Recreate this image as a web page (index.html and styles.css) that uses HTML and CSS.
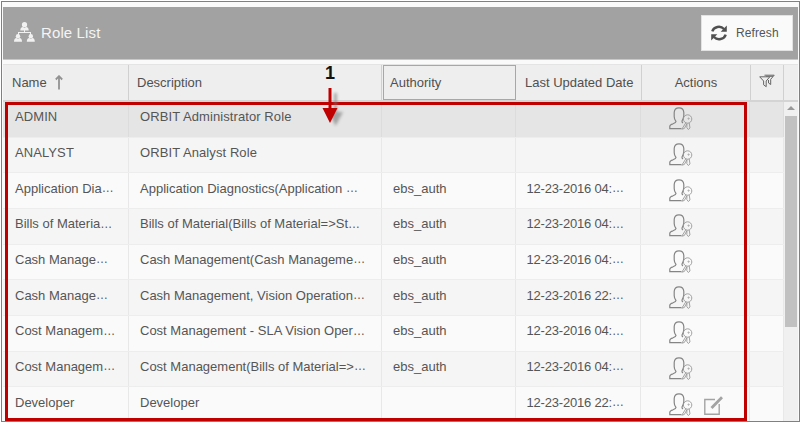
FILE: index.html
```html
<!DOCTYPE html>
<html lang="en">
<head>
<meta charset="utf-8">
<title>Role List</title>
<link rel="stylesheet" href="styles.css">
</head>
<body>
<svg width="0" height="0" class="defs">
  <symbol id="user-key" viewBox="0 0 24 24">
    <path d="M12.5 21.6H.8V19.3Q1 17.5 4 16.8Q7 15.8 7 14.5Q5.2 12.5 5.2 9.5V5.5Q5.5.8 10 .8T14.8 5.5V8.5Q14.5 12 13 14Q12.8 15.2 14 16"/>
    <g class="thin"><circle cx="18.6" cy="12" r="4.2"/>
    <circle cx="19.6" cy="11.6" r=".6"/>
    <path d="M16.8 15.8L12.8 22.2L15.3 21.5L18 16.6M18 16.6L17.8 20.5L19.3 22.5L21 21L20.2 16"/></g>
  </symbol>
</svg>
<div class="window">
  <header class="bar">
    <svg class="org" width="21" height="20" viewBox="0 0 21 20">
      <circle cx="10.5" cy="2.7" r="2.6"/><path d="M6.3 8.5Q6.3 5.2 9 5L10.5 6L12 5Q14.7 5.2 14.7 8.5Z"/>
      <path d="M10 8H11V10H17V13H16V11H5V13H4V10H10Z"/>
      <circle cx="4" cy="14.3" r="2.2"/><path d="M0 19.8Q0 16.3 2.5 16L4 17L5.5 16Q8 16.3 8 19.8Z"/>
      <circle cx="16.8" cy="14.3" r="2.2"/><path d="M12.8 19.8Q12.8 16.3 15.3 16L16.8 17L18.3 16Q20.8 16.3 20.8 19.8Z"/>
    </svg>
    <h1>Role List</h1>
    <button class="refresh">
      <svg width="16" height="16" viewBox="0 0 16 16">
        <path class="arc" d="M1.3 6.4A6.8 6.2 0 0 1 13 4M14.7 9.6A6.8 6.2 0 0 1 3 12"/>
        <path class="tip" d="M15.8.6V6.7H9.7ZM.2 15.4V9.3H6.3Z"/>
      </svg>
      <span>Refresh</span>
    </button>
  </header>
  <div class="grid">
    <div class="row head">
      <div>Name<svg class="sort" width="8" height="15" viewBox="0 0 8 15"><path d="M4 14.5V1.5M.8 4.5L4 1.2L7.2 4.5"/></svg></div>
      <div>Description</div><div class="focus">Authority</div><div>Last Updated Date</div><div class="center">Actions</div>
      <div class="filter"><svg width="16" height="14" viewBox="0 0 16 14"><path d="M5.5 1.2H15.2L11.7 5.3V10.5L9.5 9V6M7 2.3H14"/><path class="front" d="M.7 2.8H10.8L7.2 7V12.7L4.6 10.8V7Z"/></svg></div><div></div>
    </div>
    <div class="body">
      <div class="rows">
        <div class="row selected"><div>ADMIN</div><div>ORBIT Administrator Role</div><div></div><div></div><div><svg class="key"><use href="#user-key"/></svg></div><div></div></div>
        <div class="row"><div>ANALYST</div><div>ORBIT Analyst Role</div><div></div><div></div><div><svg class="key"><use href="#user-key"/></svg></div><div></div></div>
        <div class="row"><div>Application Dia<s>…</s></div><div>Application Diagnostics(Application <s>…</s></div><div>ebs_auth</div><div>12-23-2016 04:<s>…</s></div><div><svg class="key"><use href="#user-key"/></svg></div><div></div></div>
        <div class="row"><div>Bills of Materia<s>…</s></div><div>Bills of Material(Bills of Material=&gt;St<s>…</s></div><div>ebs_auth</div><div>12-23-2016 04:<s>…</s></div><div><svg class="key"><use href="#user-key"/></svg></div><div></div></div>
        <div class="row"><div>Cash Manage<s>…</s></div><div>Cash Management(Cash Manageme<s>…</s></div><div>ebs_auth</div><div>12-23-2016 04:<s>…</s></div><div><svg class="key"><use href="#user-key"/></svg></div><div></div></div>
        <div class="row"><div>Cash Manage<s>…</s></div><div>Cash Management, Vision Operation<s>…</s></div><div>ebs_auth</div><div>12-23-2016 22:<s>…</s></div><div><svg class="key"><use href="#user-key"/></svg></div><div></div></div>
        <div class="row"><div>Cost Managem<s>…</s></div><div>Cost Management - SLA Vision Oper<s>…</s></div><div>ebs_auth</div><div>12-23-2016 04:<s>…</s></div><div><svg class="key"><use href="#user-key"/></svg></div><div></div></div>
        <div class="row"><div>Cost Managem<s>…</s></div><div>Cost Management(Bills of Material=&gt;<s>…</s></div><div>ebs_auth</div><div>12-23-2016 04:<s>…</s></div><div><svg class="key"><use href="#user-key"/></svg></div><div></div></div>
        <div class="row"><div>Developer</div><div>Developer</div><div></div><div>12-23-2016 22:<s>…</s></div><div><svg class="key"><use href="#user-key"/></svg><svg class="edit" width="19" height="19" viewBox="0 0 19 19"><path d="M11 3.5H.8V18.2H15.2V8"/><path class="pencil" d="M7.5 12L18 1.2"/></svg></div><div></div></div>
      </div>
      <div class="scroll"><i class="up"></i><i class="thumb"></i></div>
    </div>
  </div>
  <div class="outline"></div>
  <div class="callout"><b>1</b><svg width="26" height="46" viewBox="0 0 26 46"><path class="shade" d="M12 5H15V24H21L13.5 38L7 24H12Z"/><path class="arrow" d="M6.5 0H9.5V20H15.5L8 35L.5 20H6.5Z"/></svg></div>
</div>
</body>
</html>
```

FILE: styles.css
```css
* { box-sizing: border-box; }
body { margin: 0; background: #fff; font: 13px "Liberation Sans", Arial, sans-serif; color: #555; }
.defs { position: absolute; }
.window { position: relative; width: 799px; height: 421px; margin: 1px 0 0 1px; padding: 5px 1px 0; border: 1px solid #808080; background: #fafafa; overflow: hidden; }
.bar { display: flex; align-items: center; height: 53px; background: #a2a2a2; padding: 0 5px 0 11px; border-bottom: 1px solid #c8c8c8; color: #f4f4f4; }
.org { fill: #f1f1f1; margin-top: -3px; }
.bar h1 { margin: -2px auto 0 6px; font-size: 15px; font-weight: normal; letter-spacing: .12px; }
.refresh { display: flex; align-items: center; gap: 9px; width: 92px; height: 36px; padding: 0 0 1px 9px; border: 1px solid #e2e2e2; background: #fafafa; font: 12px "Liberation Sans", Arial, sans-serif; letter-spacing: .1px; color: #555; }
.arc { fill: none; stroke: #505050; stroke-width: 2.4; }
.tip { fill: #505050; }
.grid { margin-top: 4px; }
.row { display: grid; grid-template-columns: 125.5px 253.5px 133.5px 125.5px 109px 33.5px; height: 35.67px; background: #fafafa; border-bottom: 1.5px solid #ededed; }
.row > div { display: flex; align-items: center; padding: 0 0 5px 12px; border-right: 1px solid #e8e8e8; white-space: pre; }
.row s { text-decoration: none; letter-spacing: 0; font-size: 12px; }
.rows .row > div:nth-child(2) { padding-left: 11.5px; }
.rows .row > div:nth-child(n+3):nth-child(-n+4) { padding-left: 11px; }
.rows .row > div:nth-child(4) { letter-spacing: -.2px; }
.rows .row:nth-child(even) { background: #f5f5f5; }
.rows .row:nth-child(-n+2) { letter-spacing: .09px; }
.rows .row.selected { background: #e5e5e5; }
.rows .selected > div { border-color: #dcdcdc; }
.row.head { grid-template-columns: 126px 253px 134px 126px 109px 33px 1fr; height: 38px; background: #eee; border-top: 1px solid #e4e4e4; border-bottom: 2px solid #d4d4d4; color: #505050; }
.row.head > div { padding: 0 0 1px 9px; border-color: #d0d0d0; }
.row.head > div:nth-child(2) { padding-left: 8px; }
.row.head > div.center { padding-left: 0; justify-content: center; }
.row.head > div.focus { border: 1px solid #7fb0e0; margin-left: 1px; padding-left: 6px; }
.row.head > div.filter { padding: 0 0 3px; justify-content: center; }
.row.head > div:last-child { border: 0; }
.sort { margin-left: 8px; fill: none; stroke: #929292; stroke-width: 1.8; }
.filter svg { fill: none; stroke: #666; stroke-width: 1; }
.filter .front { fill: #eee; }
.body { display: flex; }
.rows { width: 781px; }
.rows .row > div:nth-child(5) { padding: 0 0 0 27.5px; }
.key { width: 24px; height: 24px; fill: none; stroke: #858585; stroke-width: 1.2; }
.thin { stroke: #999; stroke-width: .9; }
.edit { margin: 1px 0 0 11px; fill: none; stroke: #a3a3a3; stroke-width: 1.4; }
.pencil { stroke-width: 2.8; }
.scroll { flex: 1; display: flex; flex-direction: column; align-items: center; background: #f0f0f0; padding-top: 4px; }
.up { border: 4px solid transparent; border-top: 0; border-bottom: 4px solid #999; }
.thumb { width: 12px; height: 211px; margin-top: 6px; background: #c1c1c1; }
.outline { position: absolute; left: 3px; top: 100px; width: 742px; height: 319px; border: 3px solid #c00000; }
.callout { position: absolute; left: 320px; top: 61px; width: 26px; height: 64px; }
.callout b { display: block; height: 25px; margin-left: 3px; font-size: 18px; line-height: 21px; color: #111; }
.arrow { fill: #c00000; }
.shade { fill: #777; opacity: .6; filter: blur(1.5px); }
```
